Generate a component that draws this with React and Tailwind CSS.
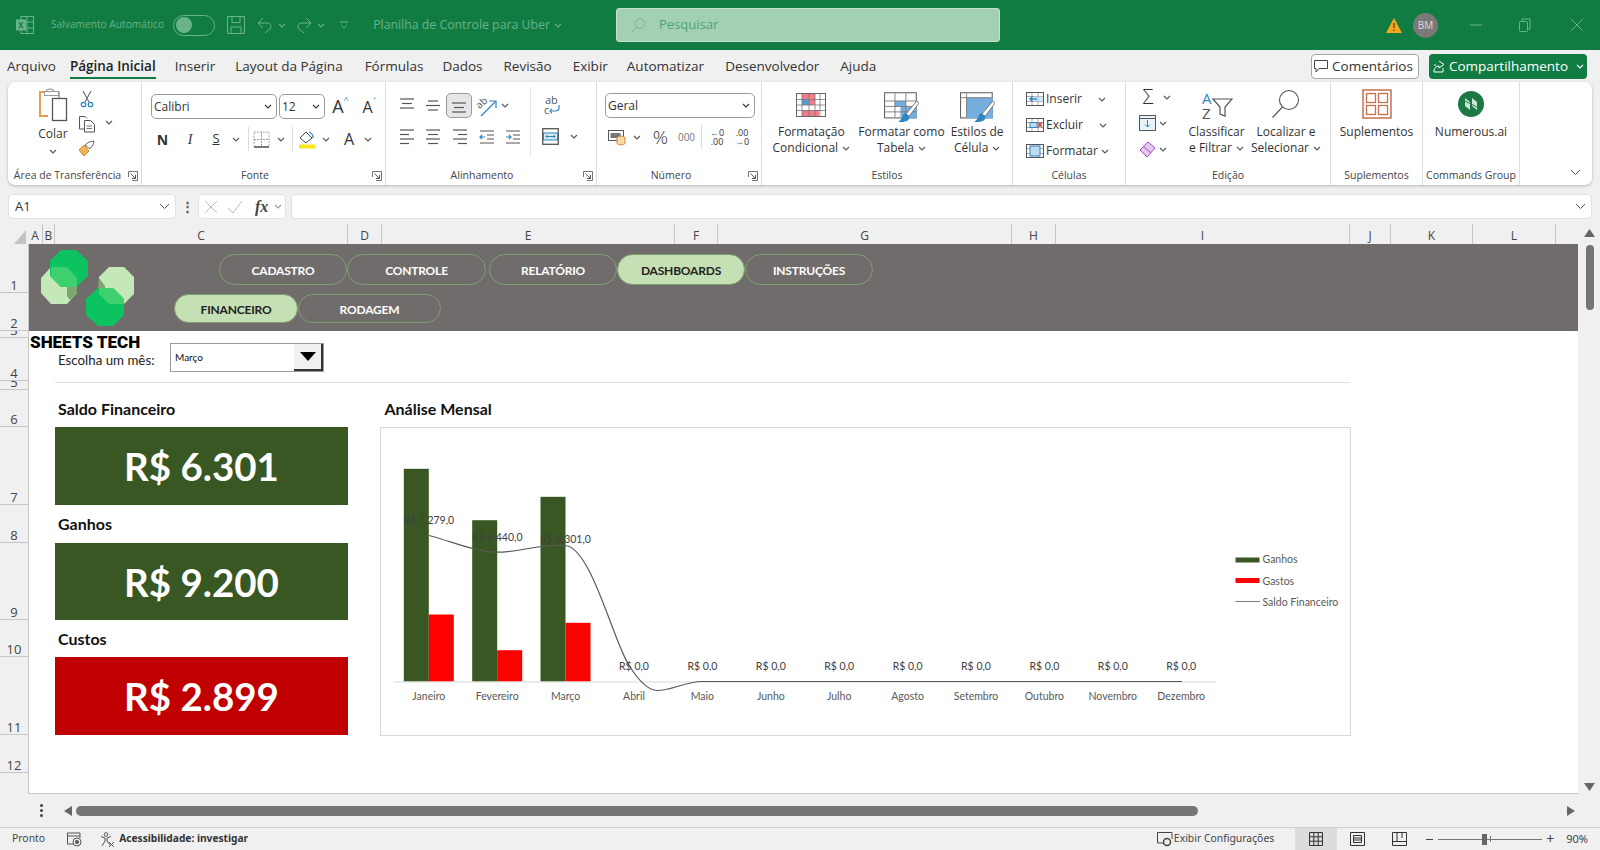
const Chev = ({ c = "#555", className = "" }) => (
  <svg width="8" height="5" viewBox="0 0 8 5" className={className}>
    <polyline points="1,1 4,4 7,1" fill="none" stroke={c} strokeWidth="1.1" />
  </svg>
);

const Launcher = () => (
  <svg width="10" height="10" viewBox="0 0 10 10">
    <path d="M.5 6V.5H9.500V9.500H4" fill="none" stroke="#777" strokeWidth="1" />
    <path d="M2.500 2.500L7.500 7.500M7.500 4V7.500H4" fill="none" stroke="#555" strokeWidth="1" />
  </svg>
);

// linhas dos botoes de alinhamento
const Lines = ({ rows, y = 2 }) => (
  <svg width="16" height="16" viewBox="0 0 16 16">
    {rows.map((r, i) => (
      <line key={i} x1={r[0]} x2={r[1]} y1={y + i * 4.500} y2={y + i * 4.500} stroke="#555" strokeWidth="1.200" />
    ))}
  </svg>
);

const Indent = ({ right }) => (
  <svg width="16" height="16" viewBox="0 0 16 16">
    <path d="M1 2H15M8 6H15M8 10H15M1 14H15" stroke="#555" strokeWidth="1.200" fill="none" />
    {right ? (
      <path d="M1 8H6M4 6L6 8L4 10" stroke="#2e86c1" strokeWidth="1.200" fill="none" />
    ) : (
      <path d="M6 8H1M3 6L1 8L3 10" stroke="#2e86c1" strokeWidth="1.200" fill="none" />
    )}
  </svg>
);

const Paste = () => (
  <svg width="30" height="36" viewBox="0 0 30 36">
    <path d="M7 5H2V29H10" fill="none" stroke="#e0a04a" strokeWidth="2" />
    <path d="M7 5H8C8 1 16 1 16 5H21V11" fill="none" stroke="#888" strokeWidth="1.200" />
    <rect x="6.500" y="4.500" width="14" height="4" fill="#fff" stroke="#999" />
    <rect x="14.500" y="11.500" width="14" height="22" fill="#fff" stroke="#555" strokeWidth="1.300" />
  </svg>
);

const Scissors = () => (
  <svg width="14" height="18" viewBox="0 0 14 18">
    <path d="M3 1L9 12M11 1L5 12" stroke="#666" strokeWidth="1.100" fill="none" />
    <circle cx="3.500" cy="14.500" r="2.200" fill="none" stroke="#2e86c1" strokeWidth="1.300" />
    <circle cx="10.500" cy="14.500" r="2.200" fill="none" stroke="#2e86c1" strokeWidth="1.300" />
  </svg>
);

const Copy = () => (
  <svg width="18" height="18" viewBox="0 0 18 18">
    <path d="M7 14H1.500V1.500H7L9 3.500" fill="#fff" stroke="#555" />
    <path d="M6.500 5.500H12.500L16.500 9.500V17H6.500Z" fill="#fff" stroke="#555" />
    <path d="M8.500 11H14M8.500 13.500H14" stroke="#777" />
  </svg>
);

const Brush = () => (
  <svg width="18" height="17" viewBox="0 0 18 17">
    <path d="M1 10L6 5L11 11L6 16Z" fill="#f0b45c" stroke="#c98a30" />
    <path d="M7 5L11 2L16 1L15 5L12 9Z" fill="#fff" stroke="#666" />
  </svg>
);

const Borders = () => (
  <svg width="17" height="17" viewBox="0 0 17 17">
    <path d="M1 1H16V16H1Z" fill="none" stroke="#aaa" strokeDasharray="2 1" />
    <path d="M8.500 1V16M1 8.500H16" stroke="#999" strokeDasharray="2 1" />
    <path d="M1 16H16" stroke="#555" strokeWidth="1.500" />
  </svg>
);

const Fill = () => (
  <svg width="18" height="20" viewBox="0 0 18 20">
    <path d="M2 9L8 3L14 9L8 14Z" fill="#fff" stroke="#444" />
    <path d="M11 3C14 4 15 7 15 9" fill="none" stroke="#2e86c1" strokeWidth="1.300" />
    <rect x="1" y="15.500" width="16" height="4" fill="#f7e81c" />
  </svg>
);

const Orient = () => (
  <svg width="22" height="22" viewBox="0 0 22 22" className="overflow-visible">
    <text x="1" y="11" fontSize="10" fill="#555" transform="rotate(-40 7 8)">ab</text>
    <path d="M6 21L20 7M14 6H21V13" fill="none" stroke="#2e86c1" strokeWidth="1.200" />
  </svg>
);

const Wrap = () => (
  <svg width="20" height="24" viewBox="0 0 20 24">
    <text x="3" y="11" fontSize="11" fill="#555">ab</text>
    <text x="2" y="21" fontSize="11" fill="#555">c</text>
    <path d="M17 12V15C17 18 15 18 13 18H8M10 15.500L8 18L10 20.500" fill="none" stroke="#2e86c1" strokeWidth="1.200" />
  </svg>
);

const Merge = () => (
  <svg width="17" height="17" viewBox="0 0 17 17">
    <rect x=".7" y=".7" width="15.600" height="15.600" fill="#fff" stroke="#555" strokeWidth="1.300" />
    <rect x="1.500" y="5" width="14" height="7" fill="#d6e9f5" stroke="#2e86c1" />
    <path d="M4 8.500H13M5.500 7L4 8.500L5.500 10M11.500 7L13 8.500L11.500 10" fill="none" stroke="#2e86c1" />
  </svg>
);

const Money = () => (
  <svg width="18" height="17" viewBox="0 0 18 17">
    <rect x=".5" y="1.500" width="15" height="10" fill="#fff" stroke="#555" />
    <rect x="2.500" y="4" width="10" height="5" fill="#777" />
    <ellipse cx="13" cy="9" rx="4" ry="2" fill="#f7d9a8" stroke="#d9822b" />
    <path d="M9 9V14C9 16.500 17 16.500 17 14V9" fill="#f7d9a8" stroke="#d9822b" />
  </svg>
);

const CondFormat = () => (
  <svg width="30" height="24" viewBox="0 0 30 24">
    <rect x=".5" y=".5" width="29" height="23" fill="#fff" stroke="#666" />
    <rect x="6" y="1" width="13" height="5.500" fill="#f47b85" />
    <rect x="13" y="6.500" width="6" height="5.500" fill="#f47b85" />
    <rect x="6" y="6.500" width="7" height="5.500" fill="#5b9bd5" />
    <rect x="6" y="17" width="17" height="6" fill="#f47b85" />
    <path d="M1 6.500H29M1 12H29M1 17.500H29M6 1V23M13 1V23M19 1V23M24 1V23" stroke="#777" strokeWidth=".8" fill="none" />
  </svg>
);

const TableFormat = ({ cell }) => (
  <svg width="35" height="31" viewBox="0 0 32 28">
    <rect x=".5" y=".5" width="29" height="23" fill="#fff" stroke="#666" />
    {cell ? (
      <rect x="6" y="5" width="24" height="19" fill="#77aee0" />
    ) : (
      <path d="M10 8H20V13H30V24H15V13H10Z" fill="#77aee0" />
    )}
    {cell ? (
      <path d="M1 5H29M6 1V23" stroke="#777" strokeWidth=".8" />
    ) : (
      <path d="M1 8H29M1 13H29M1 18H29M10 1V23M20 1V23" stroke="#777" strokeWidth=".8" />
    )}
    <path d="M30 8L20 20L23 22L32 10Z" fill="#fff" stroke="#666" strokeWidth=".8" />
    <path d="M19 19C16 21 17 25 13 27C19 28 24 26 23 22Z" fill="#2e86c1" />
  </svg>
);

const CellIcon = ({ kind }) => (
  <svg width="18" height="18" viewBox="0 0 18 18">
    <rect x=".5" y="2.500" width="17" height="13" fill="#fff" stroke="#555" />
    <path d="M1 6.500H17M1 11.500H17M6 3V15M12 3V15" stroke="#888" strokeWidth=".7" />
    {kind === "ins" && <rect x="8" y="6.500" width="9" height="5" fill="#bcdcf0" opacity=".7" />}
    {kind === "ins" && <path d="M11 9H4M6.500 6.500L4 9L6.500 11.500" fill="none" stroke="#2e86c1" strokeWidth="1.400" />}
    {kind === "del" && <rect x="4" y="6.500" width="7" height="5" fill="#bcdcf0" stroke="#2e86c1" />}
    {kind === "del" && <path d="M12 6.500L16 11M16 6.500L12 11" stroke="#d13438" strokeWidth="1.300" />}
    {kind === "fmt" && <rect x="4" y="4" width="10" height="10" fill="#bcdcf0" stroke="#2e86c1" />}
  </svg>
);

const Sort = () => (
  <svg width="32" height="34" viewBox="0 0 32 34">
    <text x="1" y="15" fontSize="15" fill="#2e86c1" fontFamily="Open Sans, sans-serif">A</text>
    <text x="1" y="30" fontSize="15" fill="#555" fontFamily="Open Sans, sans-serif">Z</text>
    <path d="M12 10H31L24 18V27L19 25V18Z" fill="#fff" stroke="#555" strokeWidth="1.200" />
  </svg>
);

const Search = ({ c = "#555", s = 30 }) => (
  <svg width={s} height={s} viewBox="0 0 30 30">
    <circle cx="18" cy="11" r="9.500" fill="none" stroke={c} strokeWidth="1.100" />
    <path d="M11.500 18L1.500 28.500" stroke={c} strokeWidth="1.100" />
  </svg>
);

const Addins = () => (
  <svg width="30" height="30" viewBox="0 0 30 30">
    <rect x="1" y="1" width="28" height="28" fill="none" stroke="#c96f4e" strokeWidth="1.500" />
    <rect x="4.500" y="4.500" width="9" height="9" fill="none" stroke="#c96f4e" strokeWidth="1.300" />
    <rect x="16.500" y="4.500" width="9" height="9" fill="none" stroke="#c96f4e" strokeWidth="1.300" />
    <rect x="4.500" y="16.500" width="9" height="9" fill="none" stroke="#c96f4e" strokeWidth="1.300" />
    <rect x="16.500" y="16.500" width="9" height="9" fill="none" stroke="#c96f4e" strokeWidth="1.300" />
  </svg>
);

const Numerous = () => (
  <svg width="26" height="26" viewBox="0 0 26 26">
    <circle cx="13" cy="13" r="13" fill="#1b7a43" />
    <path d="M7 7L12 11V19L7 15Z" fill="#cfe6d6" />
    <path d="M14 7L19 11V19L14 15Z" fill="#cfe6d6" />
    <path d="M7 10L19 16" stroke="#1b7a43" strokeWidth="1" />
  </svg>
);

const Group = ({ w, label, launcher, children, last, pr = "" }) => (
  <div className={`${w} flex flex-col h-full pt-[5px] ${last ? "" : "border-r border-[#dcdcdc]"}`}>
    <div className="h-[83px] flex shrink-0">{children}</div>
    <div className="h-[11px] shrink-0 flex items-center relative">
      <div className={`flex-1 text-center text-[10.5px] leading-none text-[#444] whitespace-nowrap ${pr}`}>{label}</div>
      {launcher && <div className="absolute right-[3px] top-[1px]"><Launcher /></div>}
    </div>
  </div>
);

const Select = ({ w, text }) => (
  <div className={`${w} h-[25px] bg-white border border-[#9a9a9a] rounded-[5px] flex items-center justify-between pl-[2px] pr-[4px] text-[12px] text-[#333]`}>
    <span>{text}</span>
    <Chev c="#333" />
  </div>
);

const BigBtn = ({ w, icon, lines, pt = "pt-[5px]" }) => (
  <div className={`${w} flex flex-col items-center text-[12px] leading-[16px] text-[#333]`}>
    <div className={`h-[37px] flex items-start ${pt}`}>{icon}</div>
    {lines.map((l, i) => (
      <div key={i} className="flex items-center gap-[4px] whitespace-nowrap">
        {l}
        {i === lines.length - 1 && lines.length > 1 && <Chev />}
      </div>
    ))}
  </div>
);

function TitleBar() {
  return (
    <div className="h-[50px] bg-[#107c41] flex items-center text-[#68b38a] shrink-0">
      <div className="w-[616px] flex items-center">
        <svg width="18" height="18" viewBox="0 0 18 18" className="ml-[16px]">
          <rect x="5" y=".5" width="12.500" height="17" fill="none" stroke="#68b38a" />
          <path d="M11 1V17M5 6H17M5 12H17" stroke="#68b38a" />
          <rect x="0" y="3.500" width="10" height="11" fill="#68b38a" />
          <path d="M3 6L7 12M7 6L3 12" stroke="#107c41" strokeWidth="1.300" />
        </svg>
        <span className="ml-[17px] text-[10.2px] whitespace-nowrap">Salvamento Automático</span>
        <div className="ml-[9px] w-[42px] h-[21px] rounded-full border border-[#68b38a] flex items-center pl-[2px]">
          <div className="w-[16px] h-[16px] rounded-full bg-[#68b38a]" />
        </div>
        <svg width="18" height="18" viewBox="0 0 18 18" className="ml-[12px]">
          <path d="M.5 .5H17.500V17.500H.5ZM5 .5V6.500H13V.5M4 17.500V11H14V17.500" fill="none" stroke="#68b38a" />
        </svg>
        <svg width="16" height="17" viewBox="0 0 16 17" className="ml-[12px]">
          <path d="M6 1L1 6L6 11M1 6H10C14 6 15 10 13 12L8 16" fill="none" stroke="#68b38a" />
        </svg>
        <Chev c="#68b38a" className="ml-[5px]" />
        <svg width="16" height="17" viewBox="0 0 16 17" className="ml-[10px]">
          <path d="M10 1L15 6L10 11M15 6H6C2 6 1 10 3 12L8 16" fill="none" stroke="#68b38a" />
        </svg>
        <Chev c="#68b38a" className="ml-[5px]" />
        <svg width="8" height="8" viewBox="0 0 8 8" className="ml-[15px]">
          <path d="M0 1H8M1 4L4 7L7 4" fill="none" stroke="#68b38a" />
        </svg>
        <span className="ml-[25px] text-[12.3px] whitespace-nowrap">Planilha de Controle para Uber</span>
        <Chev c="#68b38a" className="ml-[4px]" />
      </div>
      <div className="w-[384px] h-[34px] bg-[#a3cfb3] border border-[#c4e0cf] rounded-[3px] flex items-center pl-[14px] text-[13px] text-[#4ca677]">
        <Search c="#4ca677" s={15} />
        <span className="ml-[13px]">Pesquisar</span>
      </div>
      <div className="flex-1 flex items-center">
        <svg width="16" height="15" viewBox="0 0 16 15" className="ml-[386px]">
          <path d="M8 0L16 15H0Z" fill="#f3a71c" />
          <path d="M8 5V10M8 11.500V13" stroke="#5c3a00" strokeWidth="1.300" />
        </svg>
        <div className="ml-[11px] w-[25px] h-[25px] rounded-full bg-[#7b7878] text-[#ddd] text-[10px] flex items-center justify-center">BM</div>
        <svg width="12" height="2" viewBox="0 0 12 2" className="ml-[32px]"><path d="M0 1H12" stroke="#68b38a" /></svg>
        <svg width="12" height="14" viewBox="0 0 12 14" className="ml-[37px]">
          <rect x=".5" y="3.500" width="8" height="10" rx="1" fill="none" stroke="#68b38a" />
          <path d="M3 3V1H11V11H9" fill="none" stroke="#68b38a" />
        </svg>
        <svg width="12" height="12" viewBox="0 0 12 12" className="ml-[40px]"><path d="M0 0L12 12M12 0L0 12" stroke="#68b38a" /></svg>
      </div>
    </div>
  );
}

function Tabs() {
  const tabs = [
    ["Inserir", "ml-[19px]"],
    ["Layout da Página", "ml-[20px]"],
    ["Fórmulas", "ml-[22px]"],
    ["Dados", "ml-[19px]"],
    ["Revisão", "ml-[21px]"],
    ["Exibir", "ml-[21px]"],
    ["Automatizar", "ml-[19px]"],
    ["Desenvolvedor", "ml-[21px]"],
    ["Ajuda", "ml-[21px]"],
  ];
  return (
    <div className="h-[32px] flex items-center text-[13.500px] text-[#333] shrink-0 pl-[7px] whitespace-nowrap">
      <span>Arquivo</span>
      <div className="ml-[14px] h-full flex flex-col items-center justify-center relative font-semibold text-[#222]">
        <span>Página Inicial</span>
        <div className="absolute bottom-[3px] inset-x-0 h-[2px] bg-[#107c41]" />
      </div>
      {tabs.map(([t, m]) => (
        <span key={t} className={m}>{t}</span>
      ))}
      <div className="ml-auto w-[108px] h-[25px] bg-white border border-[#a6a6a6] rounded-[4px] flex items-center justify-center gap-[4px] pr-[3px]">
        <svg width="14" height="13" viewBox="0 0 14 13"><path d="M.5 .5H13.500V8.500H5L2 12V8.500H.5Z" fill="none" stroke="#444" /></svg>
        Comentários
      </div>
      <div className="ml-[10px] mr-[13px] w-[158px] h-[25px] bg-[#107c41] rounded-[4px] flex items-center justify-center gap-[4px] text-white">
        <svg width="13" height="13" viewBox="0 0 13 13"><path d="M7 1L12 4.500L7 8V6C4 6 3 8 2 10V12H11V8M2 5H4" fill="none" stroke="#fff" /></svg>
        Compartilhamento
        <Chev c="#fff" className="ml-[4px]" />
      </div>
    </div>
  );
}

function Ribbon() {
  return (
    <div className="h-[103px] mx-[8px] bg-white rounded-[7px] shadow-[0_1px_3px_rgba(0,0,0,0.25)] flex shrink-0 text-[#333] whitespace-nowrap">
      <Group w="w-[134px]" label={<span className="pr-[14px]">Área de Transferência</span>} launcher>
        <div className="w-[66px] flex flex-col items-center pl-[24px] text-[12px] text-[#333]">
          <Paste />
          <span className="mt-[3px] leading-[16px]">Colar</span>
          <Chev className="mt-[7px]" />
        </div>
        <div className="w-[26px] flex flex-col items-center gap-[7px] pt-[3px]">
          <Scissors />
          <Copy />
          <Brush />
        </div>
        <div className="flex items-center pl-[5px] pb-[13px]"><Chev /></div>
      </Group>

      <Group w="w-[244px]" label="Fonte" launcher pr="pr-[17px]">
        <div className="flex flex-col pl-[9px] pt-[6px]">
          <div className="flex items-center">
            <Select w="w-[126px]" text="Calibri" />
            <div className="w-[2px]" />
            <Select w="w-[46px]" text="12" />
            <div className="w-[29px] flex justify-center text-[18px] ml-[1px]">A<span className="text-[9px] text-[#2e86c1]">^</span></div>
            <div className="w-[29px] flex justify-center text-[16px]">A<span className="text-[9px] text-[#2e86c1]">ˇ</span></div>
          </div>
          <div className="flex items-center h-[26px] mt-[6px] -ml-[2px]">
            <div className="w-[27px] text-center text-[14px] font-bold">N</div>
            <div className="w-[28px] text-center text-[14px] italic font-['Liberation_Serif',serif]">I</div>
            <div className="w-[24px] text-center text-[13px] underline">S</div>
            <div className="w-[16px] flex justify-center"><Chev /></div>
            <div className="w-[6px] flex justify-center"><div className="w-px h-[24px] bg-[#ddd] ml-[3px]" /></div>
            <div className="w-[22px] flex justify-center"><Borders /></div>
            <div className="w-[18px] flex justify-center"><Chev /></div>
            <div className="w-[4px] flex justify-center"><div className="w-px h-[24px] bg-[#ddd]" /></div>
            <div className="w-[26px] flex justify-center"><Fill /></div>
            <div className="w-[12px] flex justify-center"><Chev /></div>
            <div className="w-[30px] text-center pl-[4px] text-[16px]">A</div>
            <div className="w-[12px] flex justify-center"><Chev /></div>
          </div>
        </div>
      </Group>

      <Group w="w-[211px]" label="Alinhamento" launcher pr="pr-[18px]">
        <div className="flex flex-col pl-[8px] pt-[6px] w-[145px] border-r border-[#e4e4e4] mb-[14px]">
          <div className="flex items-center h-[25px]">
            <div className="w-[26px] flex justify-center"><Lines rows={[[1, 15], [3, 13], [1, 15]]} y={1} /></div>
            <div className="w-[26px] flex justify-center"><Lines rows={[[3, 13], [1, 15], [3, 13]]} y={3} /></div>
            <div className="w-[26px] h-[25px] flex items-center justify-center bg-[#e6e6e6] border border-[#9a9a9a] rounded-[5px]"><Lines rows={[[1, 15], [3, 13], [1, 15]]} y={5} /></div>
            <div className="w-[28px] flex justify-center"><Orient /></div>
            <div className="w-[10px] flex justify-center"><Chev /></div>
          </div>
          <div className="flex items-center h-[26px] mt-[6px]">
            <div className="w-[26px] flex justify-center"><Lines rows={[[1, 15], [1, 10], [1, 15], [1, 10]]} y={1} /></div>
            <div className="w-[26px] flex justify-center"><Lines rows={[[1, 15], [3, 13], [1, 15], [3, 13]]} y={1} /></div>
            <div className="w-[27px] flex justify-center"><Lines rows={[[1, 15], [6, 15], [1, 15], [6, 15]]} y={1} /></div>
            <div className="w-[27px] flex justify-center"><Indent /></div>
            <div className="w-[26px] flex justify-center"><Indent right /></div>
          </div>
        </div>
        <div className="flex flex-col pl-[11px] pt-[6px]">
          <Wrap />
          <div className="flex items-center mt-[11px]">
            <Merge />
            <Chev className="ml-[11px]" />
          </div>
        </div>
      </Group>

      <Group w="w-[165px]" label="Número" launcher pr="pr-[16px]">
        <div className="flex flex-col pl-[8px] pt-[6px]">
          <Select w="w-[150px]" text="Geral" />
          <div className="flex items-center h-[26px] mt-[6px]">
            <div className="w-[24px] flex justify-center"><Money /></div>
            <div className="w-[16px] flex justify-center"><Chev /></div>
            <div className="w-[31px] text-center text-[19px] font-light">%</div>
            <div className="w-[21px] text-center text-[10px] text-[#777]">000</div>
            <div className="w-[8px] flex justify-center"><div className="w-px h-[24px] bg-[#ddd]" /></div>
            <div className="w-[24px] text-center text-[9px] leading-[9px]"><span className="text-[#2e86c1]">←</span>0<br />.00</div>
            <div className="w-[26px] text-center text-[9px] leading-[9px]">.00<br /><span className="text-[#2e86c1]">→</span>0</div>
          </div>
        </div>
      </Group>

      <Group w="w-[251px]" label="Estilos">
        <div className="w-[99px]"><BigBtn w="w-full" icon={<CondFormat />} pt="pt-[6px]" lines={["Formatação", "Condicional"]} /></div>
        <div className="w-[82px] flex justify-center"><BigBtn w="w-[80px]" icon={<TableFormat />} lines={["Formatar como", "Tabela"]} /></div>
        <div className="w-[70px]"><BigBtn w="w-full" icon={<TableFormat cell />} lines={["Estilos de", "Célula"]} /></div>
      </Group>

      <Group w="w-[113px]" label="Células">
        <div className="flex flex-col pl-[13px] pt-[3px] gap-[8px] text-[12px] w-full">
          {[["Inserir", "ins", "ml-[16px]"], ["Excluir", "del", "ml-[16px]"], ["Formatar", "fmt", "ml-[3px]"]].map(([t, k, m]) => (
            <div key={t} className="flex items-center h-[18px]">
              <CellIcon kind={k} />
              <span className="ml-[2px]">{t}</span>
              <Chev className={`${m}`} />
            </div>
          ))}
        </div>
      </Group>

      <Group w="w-[205px]" label="Edição">
        <div className="flex flex-col pl-[13px] w-[55px] pt-[1px] gap-[8px]">
          <div className="flex items-center h-[18px] text-[20px] leading-none">
            <span className="w-[18px] text-center font-light">Σ</span>
            <Chev className="ml-[6px]" />
          </div>
          <div className="flex items-center h-[18px]">
            <svg width="17" height="16" viewBox="0 0 17 16">
              <rect x=".5" y=".5" width="16" height="15" fill="#eaf4fb" stroke="#555" />
              <path d="M1 3.500H16" stroke="#555" />
              <path d="M8.500 5V12M6 9.500L8.500 12L11 9.500" fill="none" stroke="#2e86c1" />
            </svg>
            <Chev className="ml-[3px]" />
          </div>
          <div className="flex items-center h-[18px]">
            <svg width="17" height="17" viewBox="0 0 17 17">
              <path d="M1 9L9 1L16 7L8 16Z" fill="#e5c6ee" stroke="#a24ec0" />
              <path d="M4.500 5.500L12 12" stroke="#a24ec0" />
            </svg>
            <Chev className="ml-[3px]" />
          </div>
        </div>
        <div className="w-[71px] flex justify-center"><BigBtn w="w-[68px]" icon={<Sort />} pt="pt-[2px]" lines={["Classificar", "e Filtrar"]} /></div>
        <div className="w-[68px] flex justify-center"><BigBtn w="w-[68px]" icon={<Search />} pt="pt-[2px]" lines={["Localizar e", "Selecionar"]} /></div>
      </Group>

      <Group w="w-[92px]" label="Suplementos">
        <BigBtn w="w-full" icon={<Addins />} pt="pt-[2px]" lines={["Suplementos"]} />
      </Group>

      <Group w="w-[97px]" label="Commands Group">
        <BigBtn w="w-full" icon={<Numerous />} pt="pt-[4px]" lines={["Numerous.ai"]} />
      </Group>

      <div className="flex-1 flex items-end justify-end pr-[11px] pb-[9px]">
        <svg width="11" height="7" viewBox="0 0 11 7"><polyline points="1,1 5.500,5.500 10,1" fill="none" stroke="#555" /></svg>
      </div>
    </div>
  );
}

function FormulaBar() {
  return (
    <div className="h-[25px] mt-[9px] flex items-center px-[8px] shrink-0 text-[#333]">
      <div className="w-[168px] h-full bg-white rounded-[4px] border border-[#e2e2e2] flex items-center justify-between pl-[6px] pr-[5px] text-[13px]">
        A1 <svg width="11" height="7" viewBox="0 0 11 7"><polyline points="1,1 5.500,5.500 10,1" fill="none" stroke="#555" /></svg>
      </div>
      <div className="w-[22px] text-center font-bold text-[#555] text-[13px] leading-none">⋮</div>
      <div className="w-[88px] h-full bg-white rounded-[4px] border border-[#e2e2e2] flex items-center pl-[5px] gap-[9px]">
        <svg width="14" height="14" viewBox="0 0 14 14"><path d="M1 1L13 13M13 1L1 13" stroke="#bbb" /></svg>
        <svg width="16" height="14" viewBox="0 0 16 14"><path d="M1 8L6 13L15 1" fill="none" stroke="#bbb" /></svg>
        <span className="ml-[3px] font-['Liberation_Serif',serif] italic font-bold text-[16px] leading-none text-[#444]">fx</span>
        <Chev c="#999" className="-ml-[3px]" />
      </div>
      <div className="ml-[5px] flex-1 h-full bg-white rounded-[4px] border border-[#e2e2e2] flex items-center justify-end pr-[5px]">
        <svg width="11" height="7" viewBox="0 0 11 7"><polyline points="1,1 5.500,5.500 10,1" fill="none" stroke="#555" /></svg>
      </div>
    </div>
  );
}

function ColHeaders() {
  const cols = [
    ["A", "w-[15px]"], ["B", "w-[12px]"], ["C", "w-[293px]"], ["D", "w-[34px]"],
    ["E", "w-[293px]"], ["F", "w-[43px]"], ["G", "w-[294px]"], ["H", "w-[44px]"],
    ["I", "w-[294px]"], ["J", "w-[41px]"], ["K", "w-[82px]"], ["L", "w-[83px]"],
  ];
  return (
    <div className="h-[20px] mt-[5px] flex shrink-0 text-[12px] text-[#444]">
      <div className="w-[28px] flex items-end justify-end pr-[2px]">
        <svg width="12" height="14" viewBox="0 0 12 14"><path d="M12 0V14H0Z" fill="#c4c4c4" /></svg>
      </div>
      {cols.map(([c, w]) => (
        <div key={c} className={`${w} border-r border-[#c6c6c6] flex items-center justify-center pt-[3px]`}>{c}</div>
      ))}
      <div className="flex-1 flex justify-end pr-[5px] pt-[5px]">
        <svg width="11" height="8" viewBox="0 0 11 8"><path d="M5.500 0L11 8H0Z" fill="#666" /></svg>
      </div>
    </div>
  );
}

function RowHeaders() {
  const rows = [
    ["1", "h-[49px]"], ["2", "h-[38px]"], ["3", "h-[7px]"], ["4", "h-[43px]"],
    ["5", "h-[9px]"], ["6", "h-[37px]"], ["7", "h-[78px]"], ["8", "h-[38px]"],
    ["9", "h-[77px]"], ["10", "h-[37px]"], ["11", "h-[78px]"], ["12", "h-[38px]"],
  ];
  return (
    <div className="w-[28px] flex flex-col text-[13px] text-[#444] leading-none">
      {rows.map(([r, h]) => (
        <div key={r} className={`${h} border-b border-[#c6c6c6] flex items-end justify-center overflow-hidden`}>{r}</div>
      ))}
    </div>
  );
}

function Banner() {
  const top = [
    ["CADASTRO", "w-[128px]"], ["CONTROLE", "w-[139px]"], ["RELATÓRIO", "w-[128px] ml-[3px]"],
    ["DASHBOARDS", "w-[128px]", true], ["INSTRUÇÕES", "w-[128px]"],
  ];
  const sub = [["FINANCEIRO", "w-[124px]", true], ["RODAGEM", "w-[143px]"]];
  const pill = "h-full rounded-full border border-[#7f9e6e] flex items-center justify-center pt-[2px]";
  return (
    <div className="h-[87px] bg-[#706c6c] relative flex flex-col text-[12px] tracking-[-0.2px] font-bold text-white shrink-0 font-['Lato',sans-serif]">
      <svg width="100" height="80" viewBox="0 0 100 80" className="absolute left-[10px] top-[4px]">
        <polygon points="12,19 28,19 38,30 38,45 28,56 12,56 2,45 2,30" fill="#c5e8bb" />
        <polygon points="70,19 85,19 95,29 95,46 85,56 70,56 60,46 60,29" fill="#c5e8bb" />
        <polygon points="22,2 37,2 49,13 49,28 37,39 22,39 11,28 11,13" fill="#0cc45f" />
        <polygon points="12,19 28,19 38,30 38,39 22,39 12,29" fill="#3ed06f" />
        <polygon points="28,39 38,39 38,45 31,52 28,48" fill="#7ba66d" />
        <polygon points="59,40 74,40 85,51 85,67 74,78 59,78 47,67 47,51" fill="#0cc45f" />
        <polygon points="60,30 66,38 66,40 59,40" fill="#7ba66d" />
        <polygon points="60,40 74,40 85,51 85,56 70,56 60,46" fill="#3ed06f" />
      </svg>
      <div className="absolute left-[1px] top-[90px] text-[17px] font-black leading-none text-black whitespace-nowrap font-['Roboto',sans-serif] tracking-[0px]">SHEETS TECH</div>
      <div className="flex h-[31px] mt-[10px] ml-[190px]">
        {top.map(([t, w, on]) => (
          <div key={t} className={`${pill} ${w} ${on ? "bg-[#c5e0b4] text-[#222]" : ""}`}>{t}</div>
        ))}
      </div>
      <div className="flex h-[29px] mt-[9px] ml-[145px]">
        {sub.map(([t, w, on]) => (
          <div key={t} className={`${pill} ${w} ${on ? "bg-[#c5e0b4] text-[#222]" : ""}`}>{t}</div>
        ))}
      </div>
    </div>
  );
}

const KpiCard = ({ title, value, bg, titleH }) => (
  <div>
    <div className={`${titleH} flex items-center pl-[3px] pt-[1px] text-[16px] font-bold text-[#111]`}>{title}</div>
    <div className={`w-[293px] h-[77.500px] ${bg} flex items-center justify-center text-white font-bold text-[38.500px] pt-[3px]`}>{value}</div>
  </div>
);

const Chart = () => {
  const months = ["Janeiro", "Fevereiro", "Março", "Abril", "Maio", "Junho", "Julho", "Agosto", "Setembro", "Outubro", "Novembro", "Dezembro"];
  const ox = 380.5, oy = 428.5;
  const base = 682 - oy;
  const bars = [
    [403.3 - ox, 469.3 - oy, 615 - oy],
    [471.7 - ox, 520.7 - oy, 650.7 - oy],
    [540 - ox, 497.3 - oy, 623.3 - oy],
  ];
  const labels = [["R$ 7.279,0", 95.5], ["R$ 6.440,0", 112.5], ["R$ 6.301,0", 114.5]];
  return (
    <div className="w-[971px] h-[309px] border border-[#d9d9d9]">
      <svg width="969" height="307" viewBox="0 0 969 307" className="block bg-white font-['Lato',sans-serif]">
        {bars.map(([x, g, r], i) => (
          <g key={i}>
            <rect x={x} y={g} width="25" height={base - g} fill="#385723" />
            <rect x={x + 25} y={r} width="25" height={base - r} fill="#ff0000" />
          </g>
        ))}
        <line x1="13" x2="835" y1={base + 0.5} y2={base + 0.5} stroke="#d9d9d9" />
        <path
          d="M47.800 107.500 C70 113 95 124.200 116.200 124.200 C139 124.200 160 115.500 184.500 117.500 C210 120 232 212 247.500 236.500 C259 255 269 262.500 276 262.500 C291 262.500 304 253.500 321 253.500 L801 253.500"
          fill="none"
          stroke="#595959"
          strokeWidth="1.200"
        />
        {months.map((m, i) => (
          <g key={m}>
            <text x={47.8 + i * 68.4} y={271.5} textAnchor="middle" fontSize="10.500" fill="#595959">{m}</text>
            {i > 2 && <text x={47.8 + i * 68.4} y={241.5} textAnchor="middle" fontSize="10.500" fill="#404040">R$ 0,0</text>}
            {i <= 2 && <text x={47.8 + i * 68.4} y={labels[i][1]} textAnchor="middle" fontSize="10.500" fill="#404040">{labels[i][0]}</text>}
          </g>
        ))}
        <rect x="854.500" y="129.500" width="24" height="5" fill="#385723" />
        <text x="881.500" y="134.500" fontSize="10.500" fill="#595959">Ganhos</text>
        <rect x="854.500" y="150" width="24" height="5" fill="#ff0000" />
        <text x="881.500" y="156.500" fontSize="10.500" fill="#595959">Gastos</text>
        <line x1="854.500" x2="879" y1="173.500" y2="173.500" stroke="#7f7f7f" />
        <text x="881.500" y="177.500" fontSize="10.500" fill="#595959">Saldo Financeiro</text>
      </svg>
    </div>
  );
};

function Sheet() {
  return (
    <div className="flex-1 bg-white flex flex-col border-l border-[#c6c6c6] border-b overflow-hidden font-['Lato',sans-serif] text-[#111]">
      <Banner />
      <div className="h-[52px] ml-[26px] w-[1295px] border-b border-[#e2e2e2] flex items-center shrink-0">
        <div className="w-[115px] pl-[3px] mt-[4px] pt-[4px] text-[13.300px] text-[#222] whitespace-nowrap">Escolha um mês:</div>
        <div className="w-[154px] h-[29px] mt-[1px] border border-[#9a9a9a] flex items-center justify-between text-[10px] pl-[4px] bg-white">
          Março
          <div className="w-[29px] h-full bg-[#f0f0f0] border-r-2 border-b-2 border-[#333] flex items-center justify-center">
            <svg width="16" height="9" viewBox="0 0 16 9"><path d="M0 0H16L8 9Z" fill="#000" /></svg>
          </div>
        </div>
      </div>
      <div className="flex ml-[26px] mt-[7px]">
        <div className="w-[324.500px] flex flex-col shrink-0">
          <KpiCard title="Saldo Financeiro" value="R$ 6.301" bg="bg-[#385723]" titleH="h-[37px]" />
          <KpiCard title="Ganhos" value="R$ 9.200" bg="bg-[#385723]" titleH="h-[38px]" />
          <KpiCard title="Custos" value="R$ 2.899" bg="bg-[#c00000]" titleH="h-[37px]" />
        </div>
        <div>
          <div className="h-[37px] flex items-center pl-[5px] pt-[1px] text-[16px] font-bold">Análise Mensal</div>
          <Chart />
        </div>
      </div>
    </div>
  );
}

function BottomBars() {
  return (
    <>
      <div className="h-[33px] shrink-0 flex items-center pl-[40px] pr-[25px]">
        <div className="flex flex-col gap-[2px]">
          <div className="w-[3px] h-[3px] bg-[#444] rounded-full" />
          <div className="w-[3px] h-[3px] bg-[#444] rounded-full" />
          <div className="w-[3px] h-[3px] bg-[#444] rounded-full" />
        </div>
        <svg width="8" height="10" viewBox="0 0 8 10" className="ml-[21px]"><path d="M8 0V10L0 5Z" fill="#666" /></svg>
        <div className="ml-[4px] w-[1122px] h-[10px] rounded-full bg-[#757575]" />
        <svg width="8" height="10" viewBox="0 0 8 10" className="ml-auto"><path d="M0 0V10L8 5Z" fill="#666" /></svg>
      </div>
      <div className="h-[23px] shrink-0 border-t border-[#d0d0d0] flex items-center text-[10.400px] text-[#444] font-['Noto_Sans',sans-serif] whitespace-nowrap pr-[12px]">
        <span className="ml-[12px]">Pronto</span>
        <svg width="15" height="15" viewBox="0 0 15 15" className="ml-[22px]">
          <path d="M.5 1H13V6M.5 1V12H6M.5 4H13" fill="none" stroke="#555" />
          <circle cx="10" cy="10" r="4" fill="none" stroke="#555" />
          <circle cx="10" cy="10" r="2" fill="#555" />
        </svg>
        <svg width="15" height="15" viewBox="0 0 15 15" className="ml-[18px]">
          <circle cx="6" cy="2.500" r="1.800" fill="none" stroke="#555" />
          <path d="M1 4.500L5 6V9L2 14M11 4.500L7 6V9L10 13M9 10L14 15M14 10L9 15" fill="none" stroke="#555" />
        </svg>
        <span className="ml-[4px] font-bold text-[#333] text-[10.200px]">Acessibilidade: investigar</span>
        <svg width="16" height="15" viewBox="0 0 16 15" className="ml-auto">
          <path d="M6 11H.5V.5H15V7" fill="none" stroke="#444" />
          <circle cx="10" cy="10" r="3.500" fill="none" stroke="#444" strokeWidth="1.500" />
        </svg>
        <span className="ml-[1px]">Exibir Configurações</span>
        <div className="ml-[21px] w-[42px] h-[22px] bg-[#dcdcdc] flex items-center justify-center">
          <svg width="14" height="14" viewBox="0 0 14 14"><path d="M.5 .5H13.500V13.500H.5ZM.5 4.800H13.500M.5 9.200H13.500M4.800 .5V13.500M9.200 .5V13.500" fill="none" stroke="#333" /></svg>
        </div>
        <svg width="15" height="14" viewBox="0 0 15 14" className="ml-[13px]"><path d="M.5 .5H14.500V13.500H.5ZM3.500 3.500H11.500V10.500H3.500ZM3.500 6H11.500M3.500 8H11.500" fill="none" stroke="#333" /></svg>
        <svg width="15" height="14" viewBox="0 0 15 14" className="ml-[27px]"><path d="M.5 .5H14.500V13.500H.5ZM.5 9.500H14.500M5 .5V9.500M10 .5V6" fill="none" stroke="#333" /></svg>
        <div className="ml-[19px] w-[7px] h-px bg-[#444]" />
        <div className="ml-[5px] w-[104px] h-px bg-[#777] flex items-center">
          <div className="ml-[44px] w-[5px] h-[11px] bg-[#666]" />
          <div className="ml-[3px] w-px h-[6px] bg-[#777]" />
        </div>
        <div className="ml-[4px] text-[14px] leading-none">+</div>
        <span className="ml-[12px] text-[11px]">90%</span>
      </div>
    </>
  );
}

export default function App() {
  return (
    <div className="w-[1600px] h-[850px] overflow-hidden bg-[#f0f0f0] flex flex-col font-['Open_Sans',sans-serif]">
      <TitleBar />
      <Tabs />
      <Ribbon />
      <FormulaBar />
      <ColHeaders />
      <div className="h-[550px] flex shrink-0">
        <RowHeaders />
        <Sheet />
        <div className="w-[22px] flex flex-col items-center">
          <div className="mt-px w-[8px] h-[65px] rounded-full bg-[#757575] ml-[1px]" />
          <svg width="11" height="8" viewBox="0 0 11 8" className="mt-auto mb-[3px]"><path d="M0 0H11L5.500 8Z" fill="#666" /></svg>
        </div>
      </div>
      <BottomBars />
    </div>
  );
}
